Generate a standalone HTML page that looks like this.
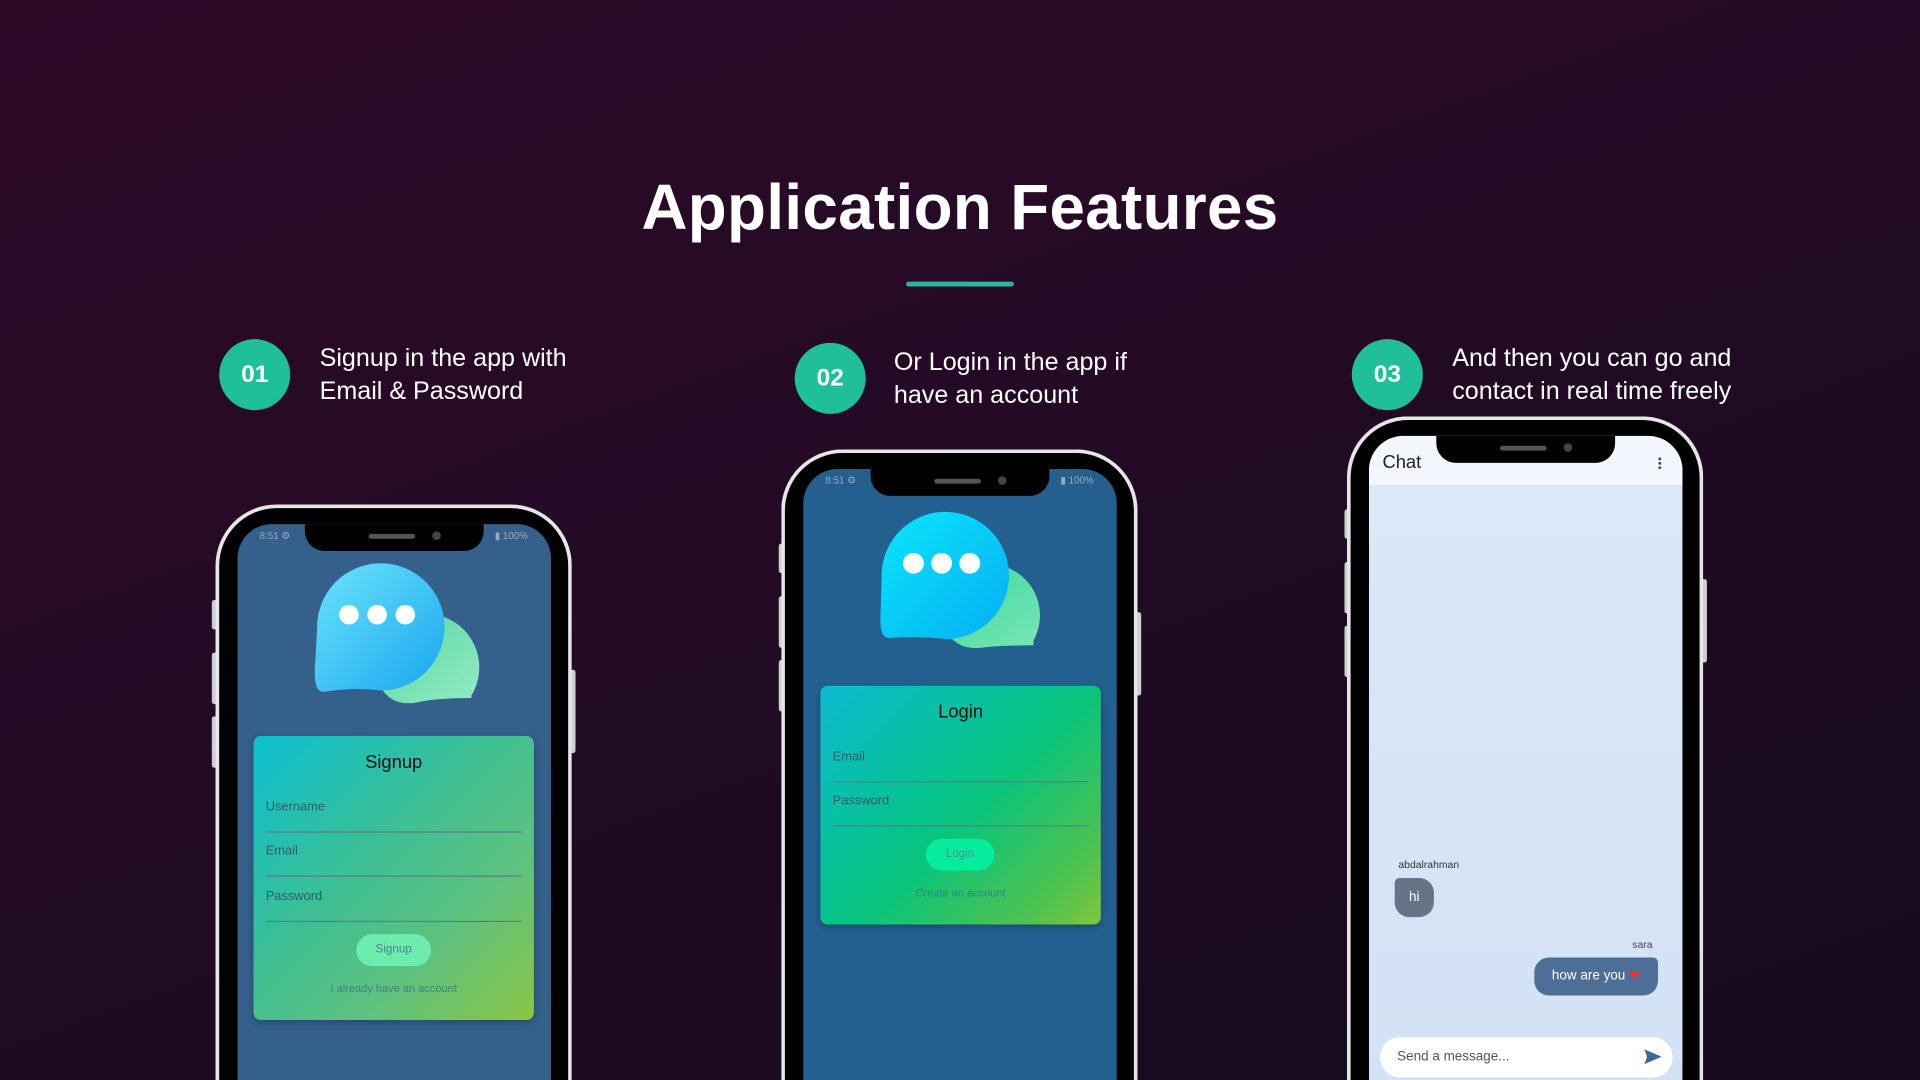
<!DOCTYPE html>
<html><head><meta charset="utf-8">
<style>
html,body{margin:0;padding:0;width:1920px;height:1080px;overflow:hidden;background:#1c0a22;}
#w{position:absolute;left:0;top:0;width:1568px;height:882px;transform:scale(1.22449);transform-origin:0 0;overflow:hidden;
background:linear-gradient(160deg,#2e0a29 0%,#230a25 45%,#150a1f 100%);font-family:"Liberation Sans",sans-serif;}
.abs{position:absolute}
h1{position:absolute;left:0;width:1568px;top:140px;margin:0;text-align:center;color:#fff;font-size:52px;font-weight:bold;letter-spacing:0.3px}
.bar{position:absolute;left:740px;top:230px;width:88px;height:4px;background:#2bb5a0;border-radius:2px}
.num{position:absolute;width:58px;height:58px;border-radius:50%;background:#1fbf9a;color:#fff;font-weight:bold;font-size:20px;text-align:center;line-height:58px}
.txt{position:absolute;color:#fff;font-size:20.5px;line-height:27px}
.phone{position:absolute;width:291px;border:3px solid #e6e6e6;border-bottom:none;border-radius:50px 50px 0 0;background:#000;box-sizing:border-box;overflow:hidden}
.btn{position:absolute;width:5px;background:#cfcfcf;border-radius:2px}
.screen{position:absolute;left:15px;top:13px;width:256px;height:700px;border-radius:28px;overflow:hidden}
.notch{position:absolute;left:55px;top:0;width:146px;height:22px;background:#000;border-radius:0 0 16px 16px}
.notch .sp{position:absolute;left:52px;top:8px;width:38px;height:4px;border-radius:2px;background:#555}
.notch .cam{position:absolute;left:104px;top:6px;width:7px;height:7px;border-radius:50%;background:#444}
.st{position:absolute;top:5px;font-size:8px;color:#9ab}
.card{position:absolute;border-radius:6px;box-shadow:0 2px 6px rgba(0,0,0,.25)}
.card .t{position:absolute;width:100%;text-align:center;font-size:15px;color:#111}
.fld{position:absolute;left:10px;right:10px;font-size:10.5px;color:#2f5d6a;border-bottom:1px solid #5a7d86;height:26px}
.cbtn{position:absolute;height:26px;border-radius:13px;font-size:9.5px;text-align:center;line-height:26px;color:#4d7f8a}
.lnk{position:absolute;width:100%;text-align:center;font-size:9px;color:#3d7e86}
</style></head><body><div id="w">
<h1>Application Features</h1>
<div class="bar"></div>

<div class="num" style="left:179px;top:277px">01</div>
<div class="txt" style="left:261px;top:279px">Signup in the app with<br>Email &amp; Password</div>
<div class="num" style="left:649px;top:280px">02</div>
<div class="txt" style="left:730px;top:282px">Or Login in the app if<br>have an account</div>
<div class="num" style="left:1104px;top:277px">03</div>
<div class="txt" style="left:1186px;top:279px">And then you can go and<br>contact in real time freely</div>

<!-- phone 1 -->
<div class="btn" style="left:173px;top:490px;height:24px"></div>
<div class="btn" style="left:173px;top:533px;height:42px"></div>
<div class="btn" style="left:173px;top:585px;height:42px"></div>
<div class="btn" style="left:465px;top:547px;height:68px"></div>
<div class="phone" style="left:176px;top:412px;height:470px">
 <div class="screen" style="background:#35608c">
  <div class="st" style="left:18px">8:51 ⚙</div><div class="st" style="left:210px">▮ 100%</div>
  <div class="notch"><div class="sp"></div><div class="cam"></div></div>
  <svg class="abs" style="left:0;top:0" width="256" height="170">
   <defs><linearGradient id="bl" x1="0" y1="0" x2="1" y2="1"><stop offset="0" stop-color="#6be4fb"/><stop offset="1" stop-color="#1aa6ef"/></linearGradient>
   <linearGradient id="gr" x1="0" y1="0" x2="1" y2="1"><stop offset="0" stop-color="#4fd6a0"/><stop offset="1" stop-color="#95ebc2"/></linearGradient></defs>
   <path d="M110 110 A44 44 0 1 1 191 140 L191 142 Q160 142 145 146 Q115 150 110 110Z" fill="url(#gr)"/>
   <path d="M63 121 L65 85 A52 52 0 1 1 118 136 Q95 133 70 137 Q63 137 63 121Z" fill="url(#bl)"/>
   <circle cx="91" cy="74" r="8" fill="#fff"/><circle cx="114" cy="74" r="8" fill="#fff"/><circle cx="137" cy="74" r="8" fill="#fff"/>
  </svg>
  <div class="card" style="left:13px;top:173px;width:229px;height:232px;background:linear-gradient(135deg,#0bbfd0 0%,#3bbf96 40%,#5fc27e 70%,#8bc545 100%)">
   <div class="t" style="top:13px">Signup</div>
   <div class="fld" style="top:52px">Username</div>
   <div class="fld" style="top:88px">Email</div>
   <div class="fld" style="top:125px">Password</div>
   <div class="cbtn" style="left:84px;top:162px;width:61px;background:#6decb0">Signup</div>
   <div class="lnk" style="top:201px;color:#41808a">I already have an account</div>
  </div>
 </div>
</div>

<!-- phone 2 -->
<div class="btn" style="left:636px;top:444px;height:24px"></div>
<div class="btn" style="left:636px;top:487px;height:42px"></div>
<div class="btn" style="left:636px;top:539px;height:42px"></div>
<div class="btn" style="left:927px;top:500px;height:68px"></div>
<div class="phone" style="left:638px;top:367px;height:515px">
 <div class="screen" style="background:#24608f">
  <div class="st" style="left:18px">8:51 ⚙</div><div class="st" style="left:210px">▮ 100%</div>
  <div class="notch"><div class="sp"></div><div class="cam"></div></div>
  <svg class="abs" style="left:0;top:0" width="256" height="170">
   <defs><linearGradient id="bl2" x1="0" y1="0" x2="1" y2="1"><stop offset="0" stop-color="#0ae6fb"/><stop offset="1" stop-color="#05aef2"/></linearGradient>
   <linearGradient id="gr2" x1="0" y1="0" x2="1" y2="1"><stop offset="0" stop-color="#34d49a"/><stop offset="1" stop-color="#7ae6b6"/></linearGradient></defs>
   <path d="M110 112 A42 42 0 1 1 188 140 L188 144 Q160 144 145 146 Q116 149 110 112Z" fill="url(#gr2)"/>
   <path d="M63 123 L64 88 A52 52 0 1 1 117 139 Q93 136 70 138 Q63 138 63 123Z" fill="url(#bl2)"/>
   <circle cx="90" cy="77" r="8.5" fill="#fff"/><circle cx="113" cy="77" r="8.5" fill="#fff"/><circle cx="136" cy="77" r="8.5" fill="#fff"/>
  </svg>
  <div class="card" style="left:14px;top:177px;width:229px;height:195px;background:linear-gradient(135deg,#0cbad0 0%,#05c38a 45%,#0cc47a 55%,#4fc24f 85%,#80c63a 100%)">
   <div class="t" style="top:13px">Login</div>
   <div class="fld" style="top:52px">Email</div>
   <div class="fld" style="top:88px">Password</div>
   <div class="cbtn" style="left:86px;top:125px;width:56px;background:#05ec9c;color:#3f9a8e">Login</div>
   <div class="lnk" style="top:164px">Create an account</div>
  </div>
 </div>
</div>

<!-- phone 3 -->
<div class="btn" style="left:1098px;top:416px;height:24px"></div>
<div class="btn" style="left:1098px;top:459px;height:42px"></div>
<div class="btn" style="left:1098px;top:511px;height:42px"></div>
<div class="btn" style="left:1389px;top:473px;height:68px"></div>
<div class="phone" style="left:1100px;top:340px;height:542px">
 <div class="screen" style="background:linear-gradient(180deg,#dde8f8,#cfdff3)">
  <div class="abs" style="left:0;top:0;width:256px;height:40px;background:#f3f6fc"></div>
  <div class="abs" style="left:11px;top:13px;font-size:15px;color:#222">Chat</div>
  <div class="abs" style="left:236px;top:17px;width:3px;height:10px;background:radial-gradient(circle,#444 1.1px,transparent 1.3px) 0 0/3px 3.6px"></div>
  <div class="notch"><div class="sp"></div><div class="cam"></div></div>
  <div class="abs" style="left:24px;top:345px;font-size:8.5px;color:#333">abdalrahman</div>
  <div class="abs" style="left:21px;top:361px;width:32px;height:32px;border-radius:4px 12px 12px 12px;background:#677386;color:#fff;font-size:11px;text-align:center;line-height:32px">hi</div>
  <div class="abs" style="left:215px;top:410px;font-size:8.5px;color:#446">sara</div>
  <div class="abs" style="left:135px;top:426px;width:101px;height:31px;border-radius:12px 4px 12px 12px;background:#4d6f97;color:#fff;font-size:11px;text-align:center;line-height:31px">how are you <span style="color:#e33">❤</span></div>
  <div class="abs" style="left:9px;top:491px;width:239px;height:33px;border-radius:17px;background:#fff;font-size:11px;color:#555;line-height:33px;padding-left:14px;box-sizing:border-box">Send a message...</div>
  <svg class="abs" style="left:224px;top:500px" width="16" height="14"><path d="M1 1 L15 7 L1 13 L3 7Z" fill="#3c6a9a"/></svg>
 </div>
</div>
</div></body></html>
